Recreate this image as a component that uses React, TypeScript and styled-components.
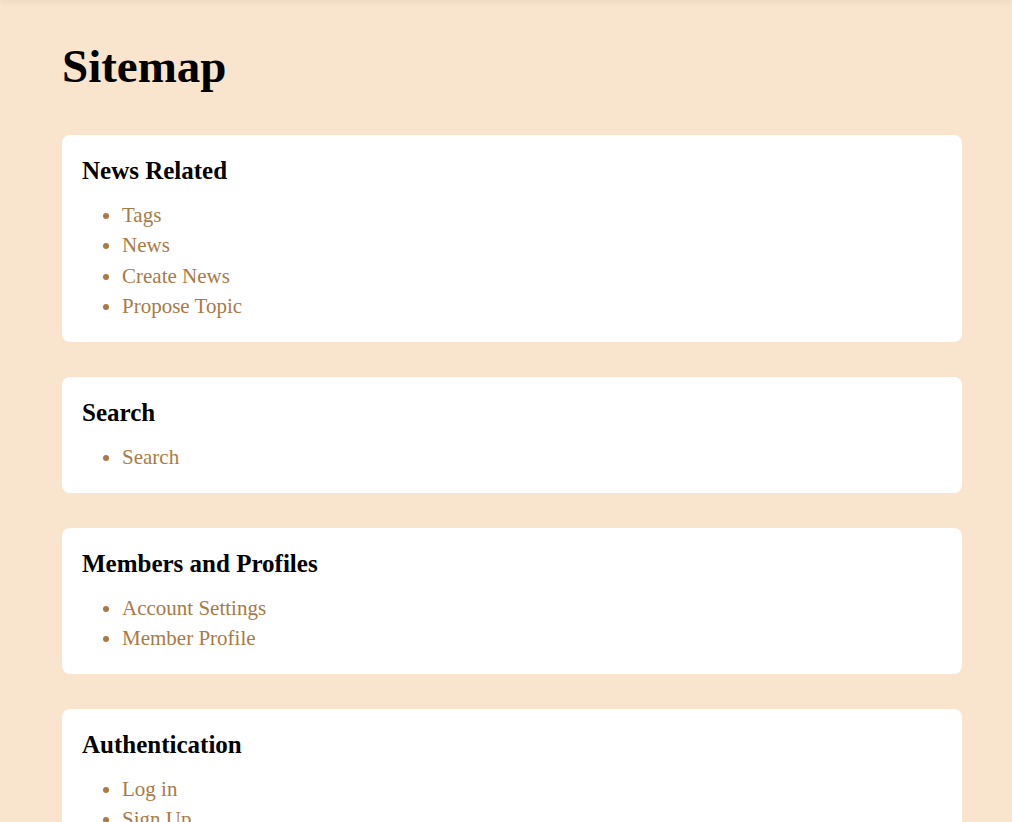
import React from "react";
import styled, { createGlobalStyle } from "styled-components";

const Global = createGlobalStyle`
  html, body { margin: 0; padding: 0; background: #f9e4cd; }
  body { font-family: "Liberation Serif", "Times New Roman", serif; color: #000; }
`;

const TopShadow = styled.div`
  height: 0;
  box-shadow: 0 0 6px 1px rgba(0, 0, 0, 0.14);
`;

const Page = styled.main`
  padding: 39px 0 40px 62px;
  width: 900px;
`;

const Title = styled.h1`
  margin: 0 0 41px;
  font-size: 47px;
  line-height: 55px;
  font-weight: 700;
`;

const Cards = styled.div`
  display: flex;
  flex-direction: column;
  gap: 35px;
`;

const Card = styled.section`
  background: #ffffff;
  border-radius: 8px;
  padding: 21px 20px 20.75px;
`;

const Heading = styled.h2`
  margin: 0 0 14px;
  font-size: 25px;
  line-height: 30px;
  font-weight: 700;
`;

const List = styled.ul`
  margin: 0;
  padding-left: 40px;
  list-style: disc;
  color: #a97a45;
`;

const Item = styled.li`
  font-size: 21px;
  line-height: 30.25px;
`;

const Link = styled.a`
  color: #a97a45;
  text-decoration: none;
`;

const sections: { title: string; links: string[] }[] = [
  { title: "News Related", links: ["Tags", "News", "Create News", "Propose Topic"] },
  { title: "Search", links: ["Search"] },
  { title: "Members and Profiles", links: ["Account Settings", "Member Profile"] },
  { title: "Authentication", links: ["Log in", "Sign Up"] },
];

export default function App() {
  return (
    <>
      <Global />
      <TopShadow />
      <Page>
        <Title>Sitemap</Title>
        <Cards>
          {sections.map((s) => (
            <Card key={s.title}>
              <Heading>{s.title}</Heading>
              <List>
                {s.links.map((l) => (
                  <Item key={l}>
                    <Link href="#">{l}</Link>
                  </Item>
                ))}
              </List>
            </Card>
          ))}
        </Cards>
      </Page>
    </>
  );
}
